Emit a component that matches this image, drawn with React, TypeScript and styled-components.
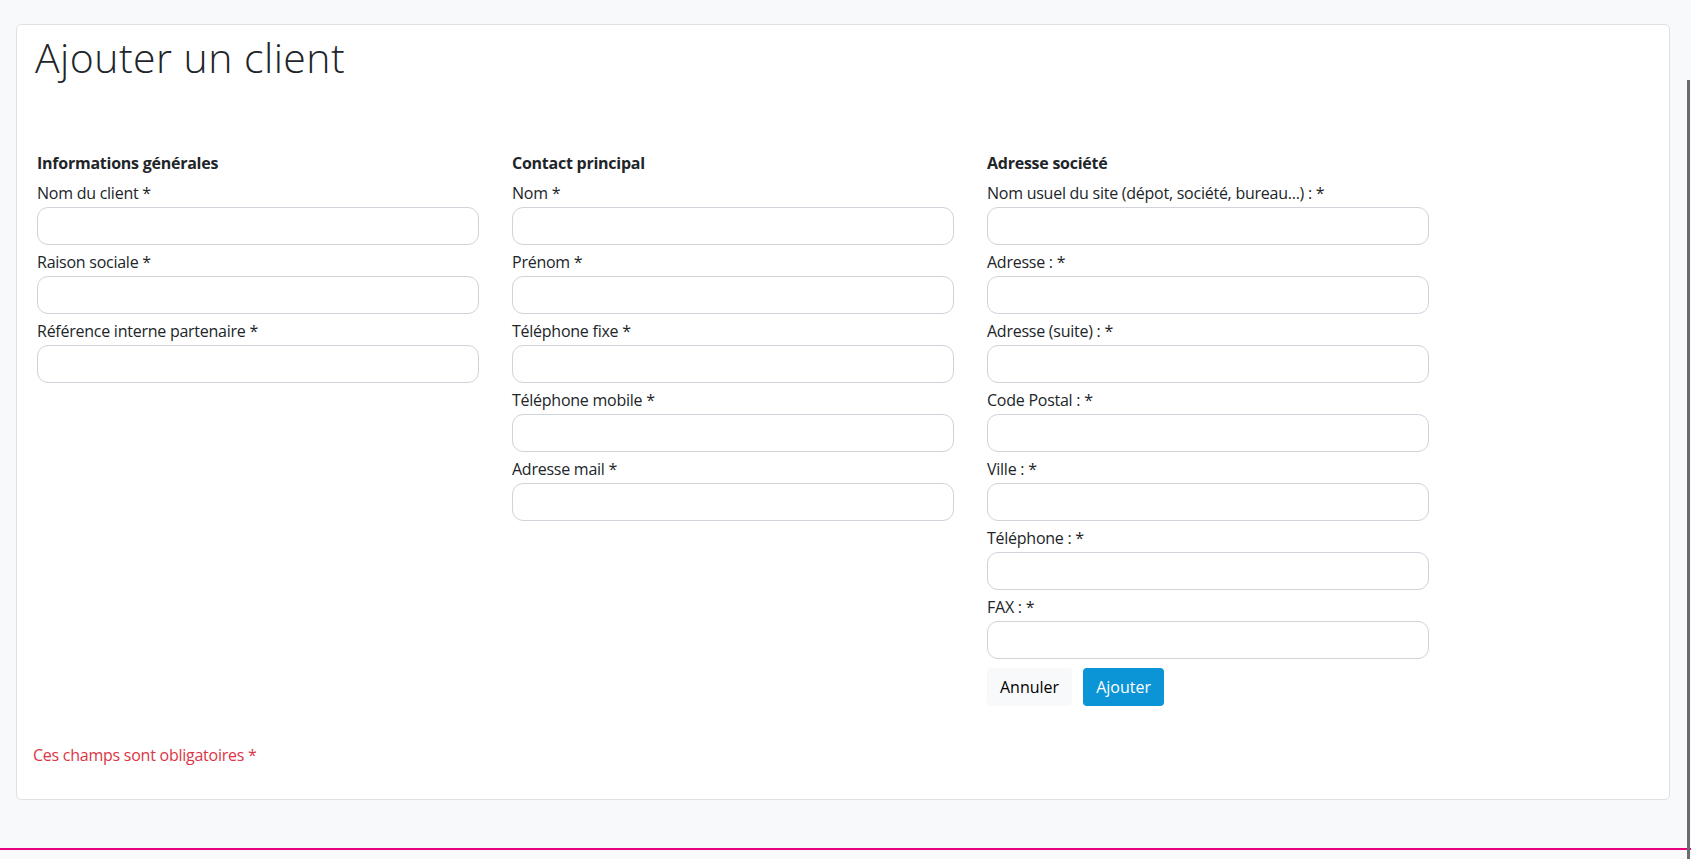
import * as React from 'react'
import styled, {createGlobalStyle} from 'styled-components'

const colors = {
    page: '#f8f9fa',
    text: '#212529',
    border: '#dee2e6',
    inputBorder: '#ced4da',
    primary: '#0b94d6',
    danger: '#dc3545',
    accent: '#e6007e',
}

const GlobalStyle = createGlobalStyle`
  html, body {
    margin: 0;
    padding: 0;
    background: ${colors.page};
  }
  body {
    font-family: "Open Sans", "Noto Sans", sans-serif;
    font-size: 16px;
    line-height: 1.5;
    letter-spacing: -0.25px;
    color: ${colors.text};
  }
  * { box-sizing: border-box; }
`

const Page = styled.div`
  min-height: 859px;
  display: flex;
  flex-direction: column;
`

const Card = styled.main`
  margin: 24px 21px 0 16px;
  padding: 8px 16px 32px;
  background: #fff;
  border: 1px solid ${colors.border};
  border-radius: 5px;
`

const Title = styled.h1`
  margin: 0 0 70px 2px;
  font-family: "Open Sans", sans-serif;
  font-weight: 300;
  font-size: 41px;
  letter-spacing: 0.45px;
  line-height: 48px;
  color: ${colors.text};
`

const Columns = styled.div`
  display: grid;
  grid-template-columns: repeat(3, 442px);
  column-gap: 33px;
  margin-left: 4px;
  align-items: start;
`

const Section = styled.section`
  display: flex;
  flex-direction: column;
`

const SectionTitle = styled.h2`
  margin: 0 0 6px;
  font-size: 16px;
  font-weight: 700;
  line-height: 24px;
`

const Field = styled.div`
  display: flex;
  flex-direction: column;
  margin-bottom: 5px;
`

const Label = styled.label`
  line-height: 24px;
  margin-bottom: 2px;
`

const Input = styled.input`
  height: 38px;
  width: 100%;
  padding: 6px 12px;
  font: inherit;
  border: 1px solid ${colors.inputBorder};
  border-radius: 11px;
  background: #fff;
  outline: none;
`

const Actions = styled.div`
  display: flex;
  gap: 11px;
  margin-top: 4px;
`

const Button = styled.button<{ $primary?: boolean }>`
  height: 38px;
  padding: 0 13px;
  font: inherit;
  border: none;
  border-radius: 4px;
  cursor: pointer;
  background: ${p => p.$primary ? colors.primary : colors.page};
  color: ${p => p.$primary ? '#fff' : '#000'};
`

const Note = styled.p`
  margin: 37px 0 0;
  color: ${colors.danger};
  line-height: 24px;
`

const Footer = styled.footer`
  margin-top: auto;
  height: 11px;
  border-top: 2px solid ${colors.accent};
`

const ScrollThumb = styled.div`
  position: fixed;
  top: 80px;
  right: 1px;
  bottom: 0;
  width: 3px;
  background: #6b6b6b;
`

const sections = [
    {
        title: 'Informations générales',
        fields: ['Nom du client *', 'Raison sociale *', 'Référence interne partenaire *'],
    },
    {
        title: 'Contact principal',
        fields: ['Nom *', 'Prénom *', 'Téléphone fixe *', 'Téléphone mobile *', 'Adresse mail *'],
    },
    {
        title: 'Adresse société',
        fields: [
            'Nom usuel du site (dépot, société, bureau...) : *',
            'Adresse : *',
            'Adresse (suite) : *',
            'Code Postal : *',
            'Ville : *',
            'Téléphone : *',
            'FAX : *',
        ],
        actions: true,
    },
]

export default function App() {
    return <Page>
        <GlobalStyle/>
        <Card>
            <Title>Ajouter un client</Title>
            <Columns>
                {sections.map(s => (
                    <Section key={s.title}>
                        <SectionTitle>{s.title}</SectionTitle>
                        {s.fields.map(f => (
                            <Field key={f}>
                                <Label>{f}</Label>
                                <Input type="text"/>
                            </Field>
                        ))}
                        {s.actions && <Actions>
                            <Button type="button">Annuler</Button>
                            <Button type="button" $primary>Ajouter</Button>
                        </Actions>}
                    </Section>
                ))}
            </Columns>
            <Note>Ces champs sont obligatoires *</Note>
        </Card>
        <Footer/>
        <ScrollThumb/>
    </Page>
}
